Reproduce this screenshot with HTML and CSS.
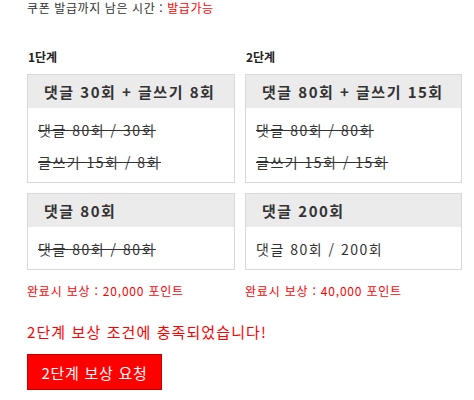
FILE: index.html
```html
<!DOCTYPE html>
<html lang="ko">
<head>
<meta charset="utf-8">
<link rel="stylesheet" href="styles.css">
</head>
<body>
<div class="page">
  <p class="timer">쿠폰 발급까지 남은 시간 : <span class="red">발급가능</span></p>
  <div class="stages">
    <div class="col col-1">
      <div class="label">1단계</div>
      <div class="box">
        <div class="box-head">댓글 30회 + 글쓰기 8회</div>
        <div class="box-body">
          <div class="done">댓글 80회 / 30회</div>
          <div class="done">글쓰기 15회 / 8회</div>
        </div>
      </div>
      <div class="box box-gap">
        <div class="box-head">댓글 80회</div>
        <div class="box-body">
          <div class="done">댓글 80회 / 80회</div>
        </div>
      </div>
      <div class="reward">완료시 보상 : 20,000 포인트</div>
    </div>
    <div class="col col-2">
      <div class="label">2단계</div>
      <div class="box">
        <div class="box-head">댓글 80회 + 글쓰기 15회</div>
        <div class="box-body">
          <div class="done">댓글 80회 / 80회</div>
          <div class="done">글쓰기 15회 / 15회</div>
        </div>
      </div>
      <div class="box box-gap">
        <div class="box-head">댓글 200회</div>
        <div class="box-body">
          <div>댓글 80회 / 200회</div>
        </div>
      </div>
      <div class="reward">완료시 보상 : 40,000 포인트</div>
    </div>
  </div>
  <p class="message">2단계 보상 조건에 충족되었습니다!</p>
  <button class="request" type="button">2단계 보상 요청</button>
</div>
</body>
</html>
```

FILE: styles.css
```css
html, body {
  margin: 0;
  padding: 0;
  background: #fff;
}
body {
  font-family: "Noto Sans CJK KR", "Noto Sans", sans-serif;
  color: #333;
}
.page {
  padding-left: 27px;
}
.timer {
  margin: 0;
  font-size: 12px;
  line-height: 16px;
  letter-spacing: 0.6px;
  color: #333;
}
.red {
  color: #ff0000;
}
.stages {
  display: flex;
  gap: 10px;
  margin-top: 33px;
}
.col-1 {
  width: 208px;
}
.col-2 {
  width: 217px;
}
.label {
  font-size: 12px;
  font-weight: bold;
  line-height: 16px;
  color: #222;
  padding-left: 1px;
}
.box {
  box-sizing: border-box;
  margin-top: 9px;
  border: 1px solid #d8d8d8;
  background: #fff;
}
.box-gap {
  margin-top: 10px;
}
.box-head {
  background: #ebebeb;
  height: 33px;
  line-height: 33px;
  padding-left: 16px;
  font-size: 15px;
  font-weight: bold;
  letter-spacing: 1.5px;
  color: #333;
  white-space: nowrap;
}
.box-body {
  padding: 6px 10px 4px;
  font-size: 14px;
  line-height: 32px;
  letter-spacing: 1.5px;
  color: #333;
}
.done {
  text-decoration: line-through;
}
.reward {
  margin-top: 13px;
  font-size: 12px;
  line-height: 16px;
  letter-spacing: 0.8px;
  color: #ff0000;
}
.message {
  margin: 23px 0 0;
  font-size: 15px;
  line-height: 20px;
  letter-spacing: 1.1px;
  color: #ff0000;
}
.request {
  display: block;
  box-sizing: border-box;
  margin-top: 12px;
  width: 135px;
  height: 36px;
  padding: 0;
  border: 1px solid #c40000;
  background: #ff0000;
  color: #fff;
  font-family: "Noto Sans CJK KR", "Noto Sans", sans-serif;
  font-size: 15px;
  letter-spacing: 0.7px;
}
```
